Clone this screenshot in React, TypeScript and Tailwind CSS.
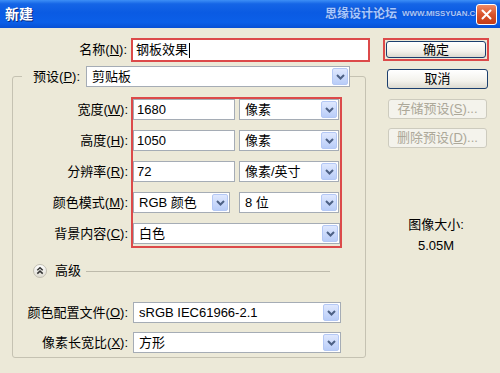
import React from 'react';

const font = "font-['Liberation_Sans','Noto_Sans_CJK_SC',sans-serif]";

function Arrow() {
    return (
        <div className="flex h-[17px] w-[16px] shrink-0 items-center justify-center rounded-[2px] border border-[#b4c8f5] bg-[linear-gradient(to_bottom,#dfe8fe,#b9cdf8)]">
            <svg width="9" height="6" viewBox="0 0 9 6">
                <path d="M1 1l3.5 3.5L8 1" fill="none" stroke="#4d6185" strokeWidth="2" />
            </svg>
        </div>
    );
}

function Select({ text, className = '' }: { text: string; className?: string }) {
    return (
        <div className={`flex h-[21px] shrink-0 items-center border border-[#a5acb5] bg-white pl-[5px] pr-[1px] ${className}`}>
            <span className="flex-1 truncate whitespace-nowrap">{text}</span>
            <Arrow />
        </div>
    );
}

function Field({ text, className = '' }: { text: string; className?: string }) {
    return (
        <div className={`flex h-[21px] shrink-0 items-center border border-[#a5acb5] bg-white pl-[3px] ${className}`}>
            {text}
        </div>
    );
}

function Label({ name, k }: { name: string; k: string }) {
    return (
        <span className="whitespace-nowrap">
            {name}(<u>{k}</u>):
        </span>
    );
}

function XpButton({ children, className = '' }: { children: React.ReactNode; className?: string }) {
    return (
        <div className={`flex items-center justify-center rounded-[3px] border border-[#1c3f6e] bg-[linear-gradient(to_bottom,#ffffff,#f3f2ec_60%,#dcdad0)] ${className}`}>
            {children}
        </div>
    );
}

function DisabledButton({ children }: { children: React.ReactNode }) {
    return (
        <div className="ml-[5px] flex h-[20px] w-[99px] items-center justify-center rounded-[3px] border border-[#cdcbbe] bg-[#f4f3ec] text-[#aca899]">
            {children}
        </div>
    );
}

export default function App() {
    return (
        <div className={`relative h-[373px] w-[500px] overflow-hidden bg-[#ece9d8] text-[13px] leading-[16px] text-black ${font}`}>
            {/* Title bar */}
            <div className="relative flex h-[28px] items-center bg-[linear-gradient(to_bottom,#3d8ff6_0%,#1565e6_14%,#0a5be3_45%,#0b5fe8_80%,#0850d4_100%)] pl-[5px] pr-[3px]">
                <span className="text-[14px] font-bold text-white [text-shadow:1px_1px_0_#0a2a80]">新建</span>
                <div className="absolute left-[325px] top-[6px] flex items-center gap-[5px] whitespace-nowrap text-[#a8c8ff] [text-shadow:0_0_1px_#1a3f9a]">
                    <span className="text-[12px] font-bold">思缘设计论坛</span>
                    <span className="text-[8px] font-bold tracking-[-0.1px]">WWW.MISSYUAN.COM</span>
                </div>
                <div className="relative z-10 ml-auto flex h-[21px] w-[21px] items-center justify-center rounded-[3px] border border-white bg-[linear-gradient(to_bottom,#f08a66,#d9532c_50%,#c43c17)]">
                    <svg width="11" height="11" viewBox="0 0 11 11">
                        <path d="M1.5 1.5l8 8M9.5 1.5l-8 8" stroke="white" strokeWidth="2" strokeLinecap="round" />
                    </svg>
                </div>
            </div>

            <div className="flex">
                {/* Left: form */}
                <div className="w-[372px] pt-[10px]">
                    {/* Name */}
                    <div className="flex h-[24px] items-center">
                        <div className="w-[127px] text-right">
                            <Label name="名称" k="N" />
                        </div>
                        <div className="ml-[4px] flex h-[24px] w-[239px] items-center border-2 border-[#dc4a4a] bg-white pl-[3px]">
                            钢板效果
                            <span className="ml-[1px] h-[15px] w-[1px] bg-black" />
                        </div>
                    </div>

                    {/* Group box */}
                    <div className="ml-[12px] mt-[14px] w-[354px] rounded-[3px] border border-[#c5c2b2] pb-[4px]">
                        {/* Preset row sits on the top border */}
                        <div className="-mt-[11px] flex h-[21px] items-center">
                            <div className="ml-[9px] flex h-[21px] w-[64px] items-center justify-end bg-[#ece9d8] pr-[6px]">
                                <Label name="预设" k="P" />
                            </div>
                            <Select text="剪贴板" className="w-[264px]" />
                        </div>

                        {/* Size rows */}
                        <div className="mt-[10px] flex">
                            <div className="flex w-[115px] flex-col gap-[10px] pt-[2px] text-right">
                                <div className="flex h-[21px] items-center justify-end"><Label name="宽度" k="W" /></div>
                                <div className="flex h-[21px] items-center justify-end"><Label name="高度" k="H" /></div>
                                <div className="flex h-[21px] items-center justify-end"><Label name="分辨率" k="R" /></div>
                                <div className="flex h-[21px] items-center justify-end"><Label name="颜色模式" k="M" /></div>
                                <div className="flex h-[21px] items-center justify-end"><Label name="背景内容" k="C" /></div>
                            </div>
                            <div className="ml-[3px] flex w-[211px] flex-col gap-[10px] border-2 border-[#dc4a4a] pb-[2px]">
                                <div className="flex gap-[4px]">
                                    <Field text="1680" className="w-[102px]" />
                                    <Select text="像素" className="w-[100px]" />
                                </div>
                                <div className="flex gap-[4px]">
                                    <Field text="1050" className="w-[102px]" />
                                    <Select text="像素" className="w-[100px]" />
                                </div>
                                <div className="flex gap-[4px]">
                                    <Field text="72" className="w-[102px]" />
                                    <Select text="像素/英寸" className="w-[100px]" />
                                </div>
                                <div className="flex gap-[9px]">
                                    <Select text="RGB 颜色" className="w-[97px]" />
                                    <Select text="8 位" className="w-[100px]" />
                                </div>
                                <div className="flex">
                                    <Select text="白色" className="w-[207px]" />
                                </div>
                            </div>
                        </div>

                        {/* Advanced */}
                        <div className="ml-[20px] mr-[35px] mt-[15px] flex h-[16px] items-center">
                            <svg width="14" height="14" viewBox="0 0 14 14" className="shrink-0">
                                <defs>
                                    <linearGradient id="adv" x1="0" y1="0" x2="0" y2="1">
                                        <stop offset="0" stopColor="#ffffff" />
                                        <stop offset="1" stopColor="#dedbd0" />
                                    </linearGradient>
                                </defs>
                                <circle cx="7" cy="7" r="6.5" fill="url(#adv)" stroke="#c2bfb2" />
                                <path d="M4.3 6.3L7 3.8l2.7 2.5M4.3 9.6L7 7.1l2.7 2.5" fill="none" stroke="#333" strokeWidth="1.5" />
                            </svg>
                            <span className="ml-[8px]">高级</span>
                            <div className="ml-[5px] h-px flex-1 bg-[#bdbaab]" />
                        </div>

                        {/* Profile rows */}
                        <div className="mt-[23px] flex flex-col gap-[9px]">
                            <div className="flex items-center">
                                <div className="w-[115px] text-right"><Label name="颜色配置文件" k="O" /></div>
                                <Select text="sRGB IEC61966-2.1" className="ml-[5px] w-[208px]" />
                            </div>
                            <div className="flex items-center">
                                <div className="w-[115px] text-right"><Label name="像素长宽比" k="X" /></div>
                                <Select text="方形" className="ml-[5px] w-[208px]" />
                            </div>
                        </div>
                    </div>
                </div>

                {/* Right: buttons */}
                <div className="ml-[11px] flex w-[106px] flex-col pt-[10px]">
                    <div className="h-[23px] w-[106px] border-2 border-[#dc4a4a] p-[1px]">
                        <XpButton className="h-[17px] w-full">确定</XpButton>
                    </div>
                    <XpButton className="ml-[4px] mt-[8px] h-[20px] w-[101px]">取消</XpButton>
                    <div className="mt-[10px]">
                        <DisabledButton>存储预设(<u>S</u>)...</DisabledButton>
                    </div>
                    <div className="mt-[9px]">
                        <DisabledButton>删除预设(<u>D</u>)...</DisabledButton>
                    </div>
                    <div className="mt-[69px] text-center">图像大小:</div>
                    <div className="mt-[5px] text-center">5.05M</div>
                </div>
            </div>
        </div>
    );
}
